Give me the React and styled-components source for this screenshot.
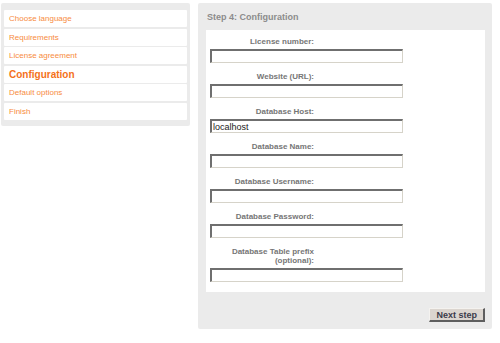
import React from "react";
import styled, { createGlobalStyle } from "styled-components";

const Global = createGlobalStyle`
  html, body { margin: 0; padding: 0; background: #fff; }
  body { font-family: "Liberation Sans", Arial, sans-serif; }
`;

const Page = styled.div`
  display: flex;
  align-items: flex-start;
  gap: 8px;
  padding: 3px 0 0 1px;
`;

const Sidebar = styled.nav`
  width: 183px;
  background: #ebebeb;
  border-radius: 2px;
  padding: 7px 3px 6px 3px;
  display: flex;
  flex-direction: column;
  gap: 1.6px;
`;

const NavItem = styled.div`
  height: 17px;
  background: #fff;
  border-radius: 1px;
  display: flex;
  align-items: center;
  padding-left: 5px;
  font-size: ${(p) => (p.$active ? "10px" : "8px")};
  font-weight: ${(p) => (p.$active ? "bold" : "normal")};
  color: ${(p) => (p.$active ? "#f4711a" : "#f78b3e")};
`;

const Main = styled.section`
  width: 294px;
  background: #ebebeb;
  border-radius: 2px;
  padding: 0 7px 7px 8px;
  box-sizing: border-box;
  display: flex;
  flex-direction: column;
`;

const Heading = styled.div`
  height: 27px;
  display: flex;
  align-items: center;
  padding-left: 1px;
  font-size: 9px;
  font-weight: bold;
  color: #8c8c8c;
`;

const Card = styled.div`
  background: #fff;
  padding: 7px 4px 10px 4px;
  display: flex;
  flex-direction: column;
  gap: 9px;
`;

const Field = styled.div`
  display: flex;
  flex-direction: column;
`;

const Label = styled.label`
  width: 104px;
  text-align: right;
  font-size: 8px;
  line-height: 9px;
  font-weight: bold;
  color: #767676;
  margin-bottom: 3px;
`;

const Input = styled.input`
  width: 193px;
  height: 14px;
  box-sizing: border-box;
  margin: 0;
  padding: 0 1px;
  font-family: "Liberation Sans", Arial, sans-serif;
  font-size: 9px;
  color: #222;
  background: #fff;
  border-style: solid;
  border-width: 2px 1px 1px 2px;
  border-color: #6f6f6f #d6d3c9 #d6d3c9 #6f6f6f;
  outline: none;
`;

const Footer = styled.div`
  display: flex;
  justify-content: flex-end;
  padding-top: 16px;
`;

const Button = styled.button`
  height: 14px;
  padding: 0 6px;
  margin: 0;
  font-family: "Liberation Sans", Arial, sans-serif;
  font-size: 9px;
  font-weight: bold;
  color: #3b3b4b;
  background: #dbd5cf;
  border-style: solid;
  border-width: 1px 2px 2px 1px;
  border-color: #f4f2ef #5e5e5e #5e5e5e #f4f2ef;
  line-height: 10px;
`;

const steps = [
  "Choose language",
  "Requirements",
  "License agreement",
  "Configuration",
  "Default options",
  "Finish",
];

const fields = [
  { label: "License number:", value: "" },
  { label: "Website (URL):", value: "" },
  { label: "Database Host:", value: "localhost" },
  { label: "Database Name:", value: "" },
  { label: "Database Username:", value: "" },
  { label: "Database Password:", value: "" },
  { label: "Database Table prefix (optional):", value: "" },
];

export default function App() {
  return (
    <>
      <Global />
      <Page>
        <Sidebar>
          {steps.map((s) => (
            <NavItem key={s} $active={s === "Configuration"}>
              {s}
            </NavItem>
          ))}
        </Sidebar>
        <Main>
          <Heading>Step 4: Configuration</Heading>
          <Card>
            {fields.map((f) => (
              <Field key={f.label}>
                <Label>{f.label}</Label>
                <Input defaultValue={f.value} />
              </Field>
            ))}
          </Card>
          <Footer>
            <Button>Next step</Button>
          </Footer>
        </Main>
      </Page>
    </>
  );
}
